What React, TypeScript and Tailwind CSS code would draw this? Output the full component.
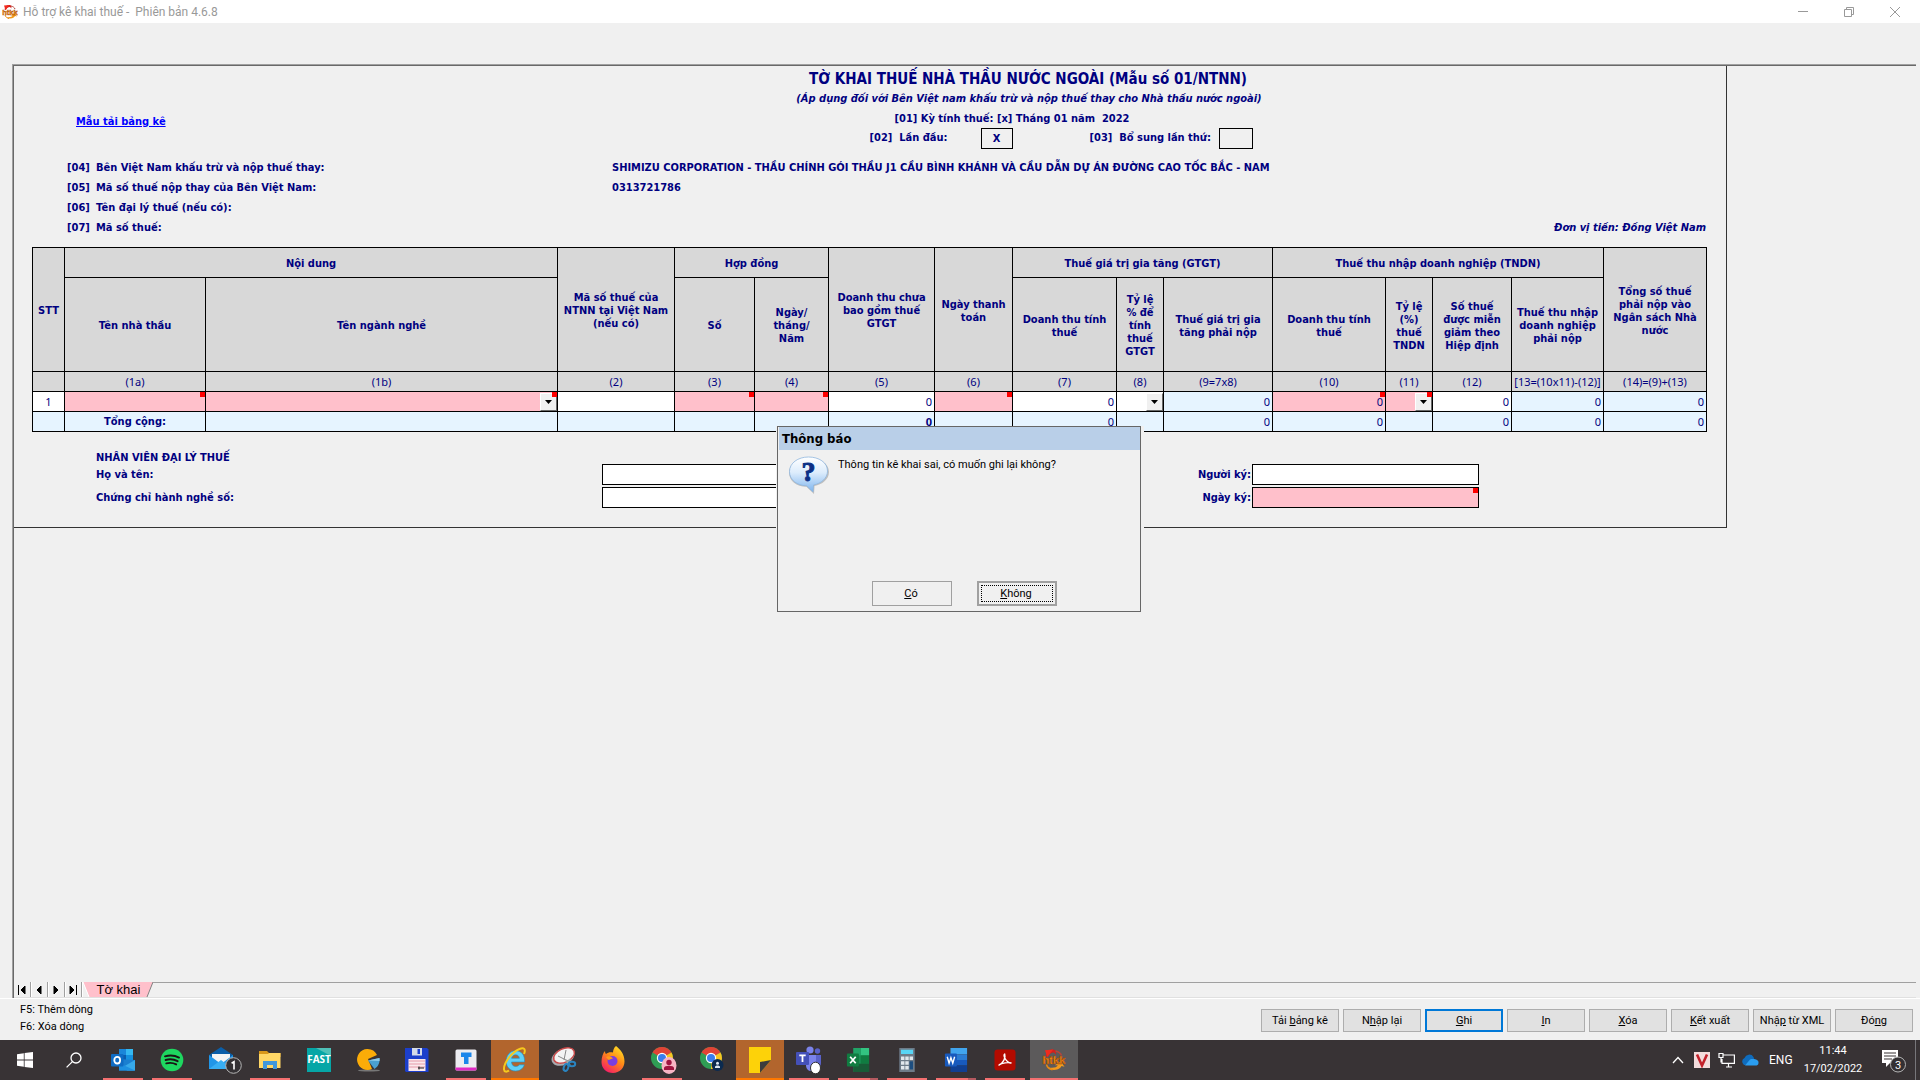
import React, { useState } from 'react';
import clsx from 'clsx';

const TAHOMA_BOLD = "font-['DejaVu_Sans_Condensed','DejaVu_Sans',sans-serif] font-bold text-[11px]";

/* ---------- icons ---------- */

const HtkkLogo = ({ className }: { className?: string }) => (
  <svg viewBox="0 0 32 32" className={className} aria-hidden="true">
    <path d="M8 12 C9 8 12 6 16 6 L19 9 L18 3 C12 0 6 4 5 11 Z" fill="#d3201c" />
    <path d="M4 3 L15 2 L7 12 Z" fill="#f02a1e" />
    <path d="M18 4 C22 5 25 7 26 10" fill="none" stroke="#b5453a" strokeWidth="2" />
    <path d="M27 21 C26 27 21 30 13 29 L9 26 C15 27 20 26 21 23 L17 23 L25 18 L30 25 L26 24 Z" fill="#f39a1c" />
    <path d="M6 22 C7 26 10 28 14 29" fill="none" stroke="#e98a12" strokeWidth="2" />
    <text x="16" y="21" textAnchor="middle" className="font-['Liberation_Sans',sans-serif] font-bold text-[15px]" fill="#ffa01e" stroke="#a64500" strokeWidth="0.8">htkk</text>
  </svg>
);

const QuestionIcon = () => (
  <svg viewBox="0 0 42 40" className="h-10 w-[42px] shrink-0" aria-hidden="true">
    <defs>
      <linearGradient id="bubble" x1="0" y1="0" x2="0" y2="1">
        <stop offset="0" stopColor="#ffffff" />
        <stop offset="0.45" stopColor="#dcecfc" />
        <stop offset="1" stopColor="#7db4ee" />
      </linearGradient>
    </defs>
    <path d="M21 3 C32 3 41 8.500 41 17 C41 24.500 34 29.500 26.500 31 L26 39 L18.500 31.800 C8.500 31.500 1 26 1 17.500 C1 9 10 3 21 3 Z" fill="#a9a9a9" opacity="0.7" />
    <path d="M20.500 2 C31 2 39.500 7.500 39.500 16 C39.500 23.500 33 28.500 25.500 30 L25 37 L18.500 30.800 C9 30.500 1.500 25 1.500 16.500 C1.500 8 10 2 20.500 2 Z" fill="url(#bubble)" stroke="#8fb6de" strokeWidth="0.8" />
    <text x="20.500" y="26" textAnchor="middle" className="font-['Liberation_Serif',serif] font-bold text-[28px]" fill="#0b2f86" stroke="#0b2f86" strokeWidth="1">?</text>
  </svg>
);

const WindowsIcon = () => (
  <svg viewBox="0 0 16 16" className="size-4" fill="#fff"><path d="M0 2.200 6.800 1.200V7.600H0ZM7.600 1.100 16 0V7.600H7.600ZM0 8.400H6.800V14.800L0 13.800ZM7.600 8.400H16V16L7.600 14.900Z" /></svg>
);
const SearchIcon = () => (
  <svg viewBox="0 0 16 16" className="size-4" fill="none" stroke="#fff" strokeWidth="1.300"><circle cx="10" cy="6" r="5" /><path d="M6.400 9.600.6 15.400" /></svg>
);
const OutlookIcon = () => (
  <svg viewBox="0 0 24 22" className="h-[22px] w-6">
    <path d="M8 0h14v13H8z" fill="#0a5cad" /><path d="M8 0h7v6H8z" fill="#1a86d9" /><path d="M15 0h7v6h-7z" fill="#35b8f1" /><path d="M15 6h7v6h-7z" fill="#1490df" />
    <path d="M8 10l16 1v10.500H8z" fill="#1a7fd0" /><path d="M24 11 12 18l4 3.500h8z" fill="#37a9ea" /><path d="M8 14l16 7.500H8z" fill="#1e90e0" />
    <rect y="5" width="12.500" height="12.500" rx="1" fill="#0f6cc4" /><ellipse cx="6.200" cy="11.200" rx="2.900" ry="3.300" fill="none" stroke="#fff" strokeWidth="1.800" />
  </svg>
);
const SpotifyIcon = () => (
  <svg viewBox="0 0 24 24" className="size-6"><circle cx="12" cy="12" r="11.300" fill="#1ed760" /><path d="M5 8.300c5-1.400 10-.9 14 1.300M5.600 12c4.300-1.200 8.500-.7 12 1.200M6.300 15.400c3.600-.9 6.900-.6 9.900 1" fill="none" stroke="#191414" strokeWidth="1.900" strokeLinecap="round" /></svg>
);
const MailIcon = () => (
  <svg viewBox="0 0 34 28" className="ml-2 h-7 w-[34px]">
    <path d="M1 9 13 1l12 8v3H1z" fill="#0b5ea8" /><path d="M4 8h18v9H4z" fill="#f4f4f4" /><path d="M1 9l12 9 12-9v14H1z" fill="#2196e8" /><path d="M1 23l12-9 12 9z" fill="#38aef3" />
    <circle cx="25.500" cy="19.500" r="7.800" fill="#333033" stroke="#b5b5b5" /><path d="M23.600 17.300 26 15.800v7.700" fill="none" stroke="#fff" strokeWidth="1.600" />
  </svg>
);
const ExplorerIcon = () => (
  <svg viewBox="0 0 22 20" className="h-5 w-[22px]"><path d="M0 1h8l2 2h11.500v4H0z" fill="#d9981a" /><path d="M0 4h9l1-1h11.500v15H0z" fill="#ffd766" /><path d="M4 19v-8h14v8h-4v-4H8v4z" fill="#3f97dc" /></svg>
);
const FastIcon = () => (
  <svg viewBox="0 0 24 24" className="size-6"><path d="M0 0h24v24H0z" fill="#06a6a6" /><path d="M9 0h15v8z" fill="#4fc0b8" /><text x="12" y="15" textAnchor="middle" fill="#fff" className="font-['Open_Sans',sans-serif] font-bold text-[10px]">FAST</text></svg>
);
const PieIcon = () => (
  <svg viewBox="0 0 24 24" className="size-6"><ellipse cx="13" cy="22.500" rx="11" ry="1" fill="#777" /><path d="M11 1a10.500 10.500 0 1 0 5 20L12 11l9-4A10.500 10.500 0 0 0 11 1Z" fill="#fbac08" /><path d="M12 12.500 23.500 10c.5 4.500-1 8-5 11Z" fill="#4aa0cf" /><path d="M12 12.500 23.500 10l.1 3Z" fill="#8fcbe9" /></svg>
);
const FloppyIcon = () => (
  <svg viewBox="0 0 24 24" className="size-6"><path d="M0 0h22l1.500 1.500V24H1L0 23z" fill="#1c3fcb" /><path d="M7 0h10v7.500H7z" fill="#d5dbe8" /><path d="M12.500 1H15v5h-2.500z" fill="#1c3fcb" /><path d="M3.500 11h17v12h-17z" fill="#fbe9ec" /><path d="M4 13h16M4 16h16M4 19h16" stroke="#e59aa8" /><path d="M13 20h6M14 18.500v3" stroke="#222" /></svg>
);
const TIcon = () => (
  <svg viewBox="0 0 22 22" className="size-[22px]"><rect width="21" height="21" rx="1.500" y=".5" x=".5" fill="#ececf0" /><path d="M.5 18.500h21V20a1.500 1.500 0 0 1-1.500 1.500H2A1.500 1.500 0 0 1 .5 20z" fill="#e02bc4" /><path d="M6 3.500h10.500V8h-3v7H9V8H6z" fill="#1b86ea" /></svg>
);
const IeIcon = () => (
  <svg viewBox="0 0 26 28" className="h-7 w-[26px]"><path d="M22.500 16H9.500c.2 3 2 4.500 4.300 4.500 1.600 0 2.800-.6 3.500-1.700h5c-1.300 4-4.500 6.200-8.600 6.200C8 25 4.200 21 4.200 15.200 4.200 9 8.300 4.800 13.800 4.800c5.600 0 9.200 4.300 8.700 11.200ZM9.600 12.300h7.800c-.3-2.300-1.700-3.500-3.700-3.500-2.200 0-3.700 1.300-4.100 3.500Z" fill="#5fd0f7" stroke="#1e8fc9" strokeWidth=".6" /><path d="M22 8C24 3 22 1 17.500 3 10 6 1.500 17 2 23.500c.2 2.700 2.700 2.500 5 1.200" fill="none" stroke="#f6c91d" strokeWidth="2" /></svg>
);
const SnipIcon = () => (
  <svg viewBox="0 0 26 28" className="h-7 w-[26px]"><ellipse cx="12" cy="11" rx="12" ry="8" transform="rotate(-25 12 11)" fill="#a9abb0" /><ellipse cx="13" cy="9.500" rx="11" ry="6.800" transform="rotate(-25 13 9.500)" fill="#f3f3f3" stroke="#c94a4a" strokeWidth="1.400" /><path d="M7 10l10 5M15 4l-2 10" stroke="#888" /><path d="M15 14l4 5M19 13l-3 5" stroke="#9aa" strokeWidth="1.500" /><ellipse cx="15" cy="21.500" rx="2.200" ry="3.500" transform="rotate(20 15 21.500)" fill="none" stroke="#2a84c0" strokeWidth="2" /><ellipse cx="21" cy="18" rx="3.200" ry="2.200" fill="none" stroke="#2a84c0" strokeWidth="2" /></svg>
);
const FirefoxIcon = () => (
  <svg viewBox="0 0 24 28" className="h-7 w-6">
    <defs><linearGradient id="fox" x1="0.800" y1="0" x2="0.200" y2="1"><stop offset="0" stopColor="#ffe226" /><stop offset=".45" stopColor="#ff8a16" /><stop offset="1" stopColor="#f5156c" /></linearGradient></defs>
    <path d="M15 0c4 3 8.500 8 8.500 15.500C23.500 22 18.500 27 12 27S.5 22.500.5 16C.5 11 2 7 4 5c0 1.500.5 2.500 1 3 2-2 5-2 7-1.500C12 4 13 1.500 15 0Z" fill="url(#fox)" /><circle cx="11.500" cy="15" r="5" fill="#7a3ee0" /><path d="M5 11c3-2 6 0 7 1.500-2 0-3 1.500-4.500 1.500" fill="#ff9b1a" />
  </svg>
);
const ChromeIcon = ({ badge }: { badge: 'person' | 'dark' }) => (
  <svg viewBox="0 0 28 30" className="ml-1 h-[30px] w-7">
    <circle cx="12" cy="13" r="11" fill="#2f9e55" /><path d="M12 13 2.500 7.500A11 11 0 0 1 21.500 7.500Z" fill="#e24335" /><path d="M12 13 21.500 7.500A11 11 0 0 1 12 24Z" fill="#fbc520" /><circle cx="12" cy="13" r="5.200" fill="#fff" /><circle cx="12" cy="13" r="4" fill="#3b7ded" />
    {badge === 'person' ? (
      <><ellipse cx="19" cy="20.500" rx="7.500" ry="8.500" fill="#f8b4c4" /><circle cx="19" cy="17.500" r="2.700" fill="#a01440" /><path d="M14 25v-2c0-3 10-3 10 0v2z" fill="#a01440" /></>
    ) : (
      <><circle cx="18.500" cy="20" r="6" fill="#0b2a4f" /><circle cx="18.500" cy="18.300" r="1.500" fill="#dbe7f3" /><path d="M16 23v-1c0-2 5-2 5 0v1z" fill="#dbe7f3" /></>
    )}
  </svg>
);
const StickyIcon = () => (
  <svg viewBox="0 0 22 26" className="h-[26px] w-[22px]"><path d="M0 0h22v13L11 26H0z" fill="#fdd209" /><path d="M11 26V15l11-2z" fill="#3d3d3d" /></svg>
);
const TeamsIcon = () => (
  <svg viewBox="0 0 26 28" className="h-7 w-[26px]"><circle cx="14" cy="4" r="3.600" fill="#7b83eb" /><circle cx="21.500" cy="5" r="2.700" fill="#5a62c8" /><path d="M10 9h10v10c0 8-10 8-10 0z" fill="#7b83eb" /><path d="M20 9h5v8c0 4-3 5-5 4z" fill="#5a62c8" /><rect y="6" width="13" height="13" rx="1" fill="#4450b8" /><path d="M3.300 9.300h6.400M6.500 9.300V16" stroke="#fff" strokeWidth="1.800" /><ellipse cx="19.500" cy="22" rx="5" ry="5.800" fill="#fff" stroke="#333" /></svg>
);
const ExcelIcon = () => (
  <svg viewBox="0 0 24 26" className="h-6 w-6"><path d="M7 0h17v26H7z" fill="#1b8f55" /><path d="M15 0h9v8h-9z" fill="#33c481" /><path d="M7 0h8v8H7z" fill="#21a366" /><path d="M15 8h9v9h-9z" fill="#107c41" /><path d="M7 17h17v9H7z" fill="#185c37" /><rect y="6" width="13" height="14" rx="1" fill="#107c41" /><path d="M3.500 9.500l6 7M9.500 9.500l-6 7" stroke="#fff" strokeWidth="1.900" /></svg>
);
const CalcIcon = () => (
  <svg viewBox="0 0 18 28" className="h-6 w-[18px]"><path d="M0 0h18v28H0z" fill="#6d7b88" /><path d="M2 2h14v5H2z" fill="#58d5f5" /><path d="M2 10h4v4H2zM7 10h4v4H7zM12 10h4v4h-4zM2 15.500h4v4H2zM7 15.500h4v4H7zM2 21h4v4H2zM7 21h4v4H7z" fill="#e1e7ec" /><path d="M12 15.500h4V25h-4z" fill="#1d4e80" /></svg>
);
const WordIcon = () => (
  <svg viewBox="0 0 24 26" className="h-6 w-6"><path d="M6 0h18v7H6z" fill="#41a5ee" /><path d="M6 7h18v6H6z" fill="#2b7cd3" /><path d="M6 13h18v6H6z" fill="#185abd" /><path d="M6 19h18v7H6z" fill="#103f91" /><rect y="6" width="13" height="14" rx="1" fill="#185abd" /><path d="M2.500 9.500l2 7 2-6 2 6 2-7" fill="none" stroke="#fff" strokeWidth="1.500" /></svg>
);
const AcrobatIcon = () => (
  <svg viewBox="0 0 22 22" className="size-[22px]"><rect width="21" height="21" x=".5" y=".5" rx="3" fill="#b30b00" /><path d="M5 16c4-1.500 7-7 5.700-11-1.500 1 .3 8 6.300 9-3-1-9 0-12 2Z" fill="none" stroke="#fff" strokeWidth="1.400" strokeLinejoin="round" /></svg>
);

/* ---------- form data ---------- */

const columnWidths = ['w-[32px]', 'w-[141px]', 'w-[352px]', 'w-[117px]', 'w-[80px]', 'w-[74px]', 'w-[106px]', 'w-[78px]', 'w-[104px]', 'w-[47px]', 'w-[109px]', 'w-[113px]', 'w-[47px]', 'w-[79px]', 'w-[92px]', 'w-[103px]'];

const columnCodes = ['', '(1a)', '(1b)', '(2)', '(3)', '(4)', '(5)', '(6)', '(7)', '(8)', '(9=7x8)', '(10)', '(11)', '(12)', '[13=(10x11)-(12)]', '(14)=(9)+(13)'];

type Cell = { name: string; kind: 'input' | 'select' | 'output'; value?: string; bg: string; required?: boolean };

const rowCells: Cell[] = [
  { name: 'Tên nhà thầu', kind: 'input', bg: 'bg-[#ffc0cb]', required: true },
  { name: 'Tên ngành nghề', kind: 'select', bg: 'bg-[#ffc0cb]', required: true },
  { name: 'Mã số thuế của NTNN', kind: 'input', bg: 'bg-white' },
  { name: 'Số hợp đồng', kind: 'input', bg: 'bg-[#ffc0cb]', required: true },
  { name: 'Ngày hợp đồng', kind: 'input', bg: 'bg-[#ffc0cb]', required: true },
  { name: 'Doanh thu chưa bao gồm thuế GTGT', kind: 'input', value: '0', bg: 'bg-white' },
  { name: 'Ngày thanh toán', kind: 'input', bg: 'bg-[#ffc0cb]', required: true },
  { name: 'Doanh thu tính thuế GTGT', kind: 'input', value: '0', bg: 'bg-white' },
  { name: 'Tỷ lệ % GTGT', kind: 'select', bg: 'bg-white' },
  { name: 'Thuế GTGT phải nộp', kind: 'output', value: '0', bg: 'bg-[#e6f4ff]' },
  { name: 'Doanh thu tính thuế TNDN', kind: 'input', value: '0', bg: 'bg-[#ffc0cb]', required: true },
  { name: 'Tỷ lệ (%) thuế TNDN', kind: 'select', bg: 'bg-[#ffc0cb]', required: true },
  { name: 'Số thuế được miễn giảm', kind: 'input', value: '0', bg: 'bg-white' },
  { name: 'Thuế TNDN phải nộp', kind: 'output', value: '0', bg: 'bg-[#e6f4ff]' },
  { name: 'Tổng số thuế phải nộp', kind: 'output', value: '0', bg: 'bg-[#e6f4ff]' },
];

const totals = ['', '', '', '', '0', '', '0', '', '0', '0', '', '0', '0', '0'];

const actions: [string, string, string][] = [
  ['Tải ', 'b', 'ảng kê'],
  ['N', 'h', 'ập lại'],
  ['', 'G', 'hi'],
  ['', 'I', 'n'],
  ['', 'X', 'óa'],
  ['', 'K', 'ết xuất'],
  ['Nhậ', 'p', ' từ XML'],
  ['Đó', 'n', 'g'],
];

type TaskItem = { name: string; icon: React.ReactNode; state?: 'open' | 'stacked' | 'alert' | 'active' };

const taskItems: TaskItem[] = [
  { name: 'Start', icon: <WindowsIcon /> },
  { name: 'Search', icon: <SearchIcon /> },
  { name: 'Outlook', icon: <OutlookIcon />, state: 'open' },
  { name: 'Spotify', icon: <SpotifyIcon />, state: 'open' },
  { name: 'Mail', icon: <MailIcon /> },
  { name: 'File Explorer', icon: <ExplorerIcon />, state: 'open' },
  { name: 'FAST', icon: <FastIcon /> },
  { name: 'Reports', icon: <PieIcon /> },
  { name: 'Total Commander', icon: <FloppyIcon /> },
  { name: 'TeamViewer', icon: <TIcon />, state: 'open' },
  { name: 'Internet Explorer', icon: <IeIcon />, state: 'alert' },
  { name: 'Snipping Tool', icon: <SnipIcon /> },
  { name: 'Firefox', icon: <FirefoxIcon /> },
  { name: 'Chrome 1', icon: <ChromeIcon badge="person" />, state: 'open' },
  { name: 'Chrome 2', icon: <ChromeIcon badge="dark" /> },
  { name: 'Sticky Notes', icon: <StickyIcon />, state: 'alert' },
  { name: 'Teams', icon: <TeamsIcon />, state: 'open' },
  { name: 'Excel', icon: <ExcelIcon />, state: 'stacked' },
  { name: 'Calculator', icon: <CalcIcon />, state: 'open' },
  { name: 'Word', icon: <WordIcon />, state: 'stacked' },
  { name: 'Acrobat', icon: <AcrobatIcon />, state: 'open' },
  { name: 'HTKK', icon: <HtkkLogo className="size-6" />, state: 'active' },
];

/* ---------- pieces ---------- */

const RequiredMark = () => <span className="pointer-events-none absolute top-0 right-0 size-[5px] bg-[#ff0000]" />;

const TitleBar = () => (
  <header className="flex h-[23px] shrink-0 items-center bg-white pl-0.5 text-[#999]">
    <HtkkLogo className="size-4" />
    <h1 className="ml-[5px] flex-1 whitespace-pre font-[Roboto,sans-serif] text-xs">{'Hỗ trợ kê khai thuế -  Phiên bản 4.6.8'}</h1>
    <button aria-label="Minimize" className="flex h-full w-[46px] items-center justify-center">
      <svg viewBox="0 0 10 10" className="size-2.5"><path d="M0 4.500h10" stroke="#999" /></svg>
    </button>
    <button aria-label="Restore" className="flex h-full w-[46px] items-center justify-center">
      <svg viewBox="0 0 10 10" className="size-2.5" fill="none" stroke="#999"><path d="M.5 2.500h7v7h-7zM2.500 2.500v-2h7v7h-2" /></svg>
    </button>
    <button aria-label="Close" className="mr-0.5 flex h-full w-[46px] items-center justify-center">
      <svg viewBox="0 0 10 10" className="size-2.5" fill="none" stroke="#999"><path d="M0 0l10 10M10 0L0 10" /></svg>
    </button>
  </header>
);

const InfoRow = ({ code, label, value, note }: { code: string; label: string; value?: string; note?: string }) => (
  <div className="flex h-5 items-center pt-0.5 pr-5 pl-[53px] whitespace-nowrap">
    <span className="w-[29px]">{code}</span>
    <span className="w-[516px]">{label}</span>
    <span className="flex-1">{value}</span>
    {note && <span className="italic">{note}</span>}
  </div>
);

const Th = ({ children, span = 1, rows = 1 }: { children?: React.ReactNode; span?: number; rows?: number }) => (
  <th colSpan={span} rowSpan={rows} className="border border-black bg-[#d8d8d8] p-0 pt-0.5 text-center align-middle font-bold">
    {children}
  </th>
);

const DataCell = ({ cell }: { cell: Cell }) => (
  <td className={clsx('relative border border-black p-0', cell.bg)}>
    {cell.kind === 'input' && (
      <input aria-label={cell.name} defaultValue={cell.value} className="block h-[19px] w-full bg-transparent pr-0.5 text-right outline-none" />
    )}
    {cell.kind === 'output' && <span className="block pr-0.5 text-right">{cell.value}</span>}
    {cell.kind === 'select' && (
      <>
        <select aria-label={cell.name} className="block h-[19px] w-full appearance-none bg-transparent outline-none">
          <option value=""></option>
        </select>
        <span className="pointer-events-none absolute top-px right-0 flex h-[18px] w-[17px] items-center justify-center border border-t-white border-r-[#696969] border-b-[#696969] border-l-white bg-[#f0f0f0]">
          <svg viewBox="0 0 7 4" className="h-1 w-[7px]"><path d="M0 0h7L3.500 4z" /></svg>
        </span>
      </>
    )}
    {cell.required && <RequiredMark />}
  </td>
);

const DeclarationTable = () => (
  <div className="mt-2.5 pr-[21px] pl-[18px]">
    <table className="w-full table-fixed border-collapse leading-[13px]">
      <colgroup>
        {columnWidths.map((w, i) => <col key={i} className={w} />)}
      </colgroup>
      <thead>
        <tr className="h-[30px]">
          <Th rows={2}>STT</Th>
          <Th span={2}>Nội dung</Th>
          <Th rows={2}>Mã số thuế của<br />NTNN tại Việt Nam<br />(nếu có)</Th>
          <Th span={2}>Hợp đồng</Th>
          <Th rows={2}>Doanh thu chưa<br />bao gồm thuế<br />GTGT</Th>
          <Th rows={2}>Ngày thanh<br />toán</Th>
          <Th span={3}>Thuế giá trị gia tăng (GTGT)</Th>
          <Th span={4}>Thuế thu nhập doanh nghiệp (TNDN)</Th>
          <Th rows={2}>Tổng số thuế<br />phải nộp vào<br />Ngân sách Nhà<br />nước</Th>
        </tr>
        <tr className="h-[94px]">
          <Th>Tên nhà thầu</Th>
          <Th>Tên ngành nghề</Th>
          <Th>Số</Th>
          <Th>Ngày/<br />tháng/<br />Năm</Th>
          <Th>Doanh thu tính<br />thuế</Th>
          <Th>Tỷ lệ<br />% để<br />tính<br />thuế<br />GTGT</Th>
          <Th>Thuế giá trị gia<br />tăng phải nộp</Th>
          <Th>Doanh thu tính<br />thuế</Th>
          <Th>Tỷ lệ<br />(%)<br />thuế<br />TNDN</Th>
          <Th>Số thuế<br />được miễn<br />giảm theo<br />Hiệp định</Th>
          <Th>Thuế thu nhập<br />doanh nghiệp<br />phải nộp</Th>
        </tr>
        <tr className="h-5 bg-[#d8d8d8] font-['Noto_Sans',sans-serif]">
          {columnCodes.map((code, i) => (
            <td key={i} className="border border-black p-0 text-center font-normal whitespace-nowrap">{code}</td>
          ))}
        </tr>
      </thead>
      <tbody className="font-['Noto_Sans',sans-serif] font-normal">
        <tr className="h-5">
          <td className="border border-black bg-white p-0 text-center">1</td>
          {rowCells.map((cell) => <DataCell key={cell.name} cell={cell} />)}
        </tr>
        <tr className="h-5 bg-[#e6f4ff]">
          <td className="border border-black p-0" />
          <td className={clsx('border border-black p-0 text-center', TAHOMA_BOLD)}>Tổng cộng:</td>
          {totals.map((t, i) => (
            <td key={i} className={clsx('border border-black p-0 pr-0.5 text-right', i === 4 && 'font-bold')}>{t}</td>
          ))}
        </tr>
      </tbody>
    </table>
  </div>
);

const SignatureRow = ({ id, left, right, required }: { id: string; left: string; right: string; required?: boolean }) => (
  <div className="flex h-[21px] items-stretch">
    <label htmlFor={`${id}-agent`} className="flex w-[506px] items-center pt-0.5">{left}</label>
    <input id={`${id}-agent`} className="w-[325px] border border-black bg-white px-1" />
    <label htmlFor={`${id}-sign`} className="flex flex-1 items-center justify-end pt-0.5 pr-px">{right}</label>
    <div className="relative w-[227px]">
      <input id={`${id}-sign`} className={clsx('block h-full w-full border border-black px-1', required ? 'bg-[#ffc0cb]' : 'bg-white')} />
      {required && <span className="absolute top-px right-px size-[5px] bg-[#ff0000]" />}
    </div>
  </div>
);

const Declaration = () => (
  <section className={clsx('mr-[189px] border-r border-b border-[#333] pb-[19px] text-[#000080]', TAHOMA_BOLD)}>
    <h2 className="h-[22px] pt-0.5 pl-[316px] text-center text-[15px] leading-[22px]">TỜ KHAI THUẾ NHÀ THẦU NƯỚC NGOÀI (Mẫu số 01/NTNN)</h2>
    <p className="h-5 pl-[318px] text-center leading-[22px] italic">(Áp dụng đối với Bên Việt nam khấu trừ và nộp thuế thay cho Nhà thầu nước ngoài)</p>
    <div className="flex h-5 items-center pt-0.5">
      <div className="w-[316px] pt-1.5 pl-[62px]">
        <a href="#" className="text-[#0000ff] underline">Mẫu tải bảng kê</a>
      </div>
      <p className="flex-1 pr-8 text-center whitespace-pre">{'[01] Kỳ tính thuế: [x] Tháng 01 năm  2022'}</p>
    </div>
    <div className="flex h-5 items-center justify-center pl-[382px]">
      <label htmlFor="first" className="w-[111px] whitespace-pre">{'[02]  Lần đầu:'}</label>
      <input id="first" defaultValue="X" className="h-[21px] w-8 border border-black bg-transparent text-center" />
      <label htmlFor="extra" className="ml-[77px] w-[129px] whitespace-pre">{'[03]  Bổ sung lần thứ:'}</label>
      <input id="extra" className="h-[21px] w-[34px] border border-black bg-transparent text-center" />
    </div>
    <div className="mt-[9px]">
      <InfoRow code="[04]" label="Bên Việt Nam khấu trừ và nộp thuế thay:" value="SHIMIZU CORPORATION - THẦU CHÍNH GÓI THẦU J1 CẦU BÌNH KHÁNH VÀ CẦU DẪN DỰ ÁN ĐƯỜNG CAO TỐC BẮC - NAM" />
      <InfoRow code="[05]" label="Mã số thuế nộp thay của Bên Việt Nam:" value="0313721786" />
      <InfoRow code="[06]" label="Tên đại lý thuế (nếu có):" />
      <InfoRow code="[07]" label="Mã số thuế:" note="Đơn vị tiền: Đồng Việt Nam" />
    </div>
    <DeclarationTable />
    <div className="mt-[18px] flex flex-col gap-0.5 pr-[247px] pl-[82px]">
      <h3 className="h-3 leading-4">NHÂN VIÊN ĐẠI LÝ THUẾ</h3>
      <SignatureRow id="name" left="Họ và tên:" right="Người ký:" />
      <SignatureRow id="date" left="Chứng chỉ hành nghề số:" right="Ngày ký:" required />
    </div>
  </section>
);

const SheetTabs = () => {
  const navs: [string, string][] = [
    ['First sheet', 'M1.500 1v10M8 2v8L4 6z'],
    ['Previous sheet', 'M7 2v8L3 6z'],
    ['Next sheet', 'M3 2v8l4-4z'],
    ['Last sheet', 'M8.500 1v10M2 2v8l4-4z'],
  ];
  return (
    <div className="flex h-4 border-b border-[#e0e0e0]">
      {navs.map(([label, d]) => (
        <button key={label} aria-label={label} className="flex w-[17px] items-center justify-center border-r border-[#a0a0a0] shadow-[1px_0_0_#fff]">
          <svg viewBox="0 0 10 12" className="h-3 w-2.5" fill="#000" stroke="#000"><path d={d} /></svg>
        </button>
      ))}
      <button className="relative flex h-[15px] w-[71px] items-center justify-center text-black">
        <svg viewBox="0 0 71 15" className="absolute inset-0 h-[15px] w-[71px]" aria-hidden="true">
          <path d="M1 0h70l-6 15H7z" fill="#ffc0cb" />
          <path d="M1 0l6 15" stroke="#fff" />
          <path d="M71 0l-6 15" stroke="#808080" />
        </svg>
        <span className="relative pt-px pl-0.5 font-['Liberation_Sans',sans-serif] text-[13px] leading-[14px]">Tờ khai</span>
      </button>
      <div className="flex-1 border-t border-[#a0a0a0]" />
    </div>
  );
};

const ActionBar = () => (
  <footer className="flex h-[42px] shrink-0 items-start justify-between border-t border-white pr-[7px] pl-5 font-[Roboto,sans-serif] text-[11px] text-black">
    <p className="pt-0.5 leading-[17px]">F5: Thêm dòng<br />F6: Xóa dòng</p>
    <div className="flex gap-1 pt-2.5">
      {actions.map(([pre, key, post]) => (
        <button key={key + post} className={clsx('h-[23px] w-[78px] bg-[#e1e1e1] pt-0.5 whitespace-pre', key === 'G' ? 'border-2 border-[#0078d7]' : 'border border-[#adadad]')}>
          {pre}<u>{key}</u>{post}
        </button>
      ))}
    </div>
  </footer>
);

const ConfirmDialog = ({ onClose }: { onClose: () => void }) => (
  <div className="absolute inset-0 flex items-center justify-center pr-0.5 pb-0.5">
    <div role="dialog" aria-labelledby="dlg-title" className="flex h-[186px] w-[364px] flex-col border border-[#666] bg-[#f0f0f0] font-[Roboto,sans-serif] text-[11px] text-black shadow-[3px_0_0_#f0f0f0,-1px_0_0_#f0f0f0]">
      <h2 id="dlg-title" className="ml-px h-[23px] bg-[#b9cfe8] pl-[3px] font-['DejaVu_Sans_Condensed',sans-serif] text-[13px] leading-[23px] font-bold">Thông báo</h2>
      <div className="flex flex-1 gap-2 pt-[5px] pl-2.5">
        <QuestionIcon />
        <p className="pt-0.5">Thông tin kê khai sai, có muốn ghi lại không?</p>
      </div>
      <div className="mb-[5px] flex gap-[25px] pl-[94px]">
        <button onClick={onClose} className="h-[25px] w-20 border border-[#a0a0a0] pt-0.5 pr-0.5"><u>C</u>ó</button>
        <button onClick={onClose} className="h-[25px] w-20 border-2 border-[#a0a0a0] p-0.5">
          <span className="flex h-full items-center justify-center border border-dotted border-black pt-0.5 pr-0.5 whitespace-pre"><u>K</u>hông</span>
        </button>
      </div>
    </div>
  </div>
);

const TaskButton = ({ item }: { item: TaskItem }) => (
  <button
    title={item.name}
    className={clsx(
      'relative flex h-10 w-12 items-center justify-center',
      item.state === 'alert' && 'bg-[#b2652d]',
      item.state === 'active' && 'bg-[#5c5a5b]',
    )}
  >
    {item.icon}
    {item.state === 'open' && <span className="absolute inset-x-1 bottom-0 h-0.5 bg-[#f47070]" />}
    {item.state === 'stacked' && <span className="absolute inset-x-1 bottom-0 h-0.5 border-r-8 border-[#b55a60] bg-[#f47070]" />}
    {item.state === 'alert' && <span className="absolute inset-x-0 bottom-0 h-0.5 bg-[#ff7800]" />}
    {item.state === 'active' && <span className="absolute inset-x-0 bottom-0 h-0.5 bg-[#f47070]" />}
  </button>
);

const Taskbar = () => (
  <nav className="flex h-10 shrink-0 items-center justify-between bg-[#383335] pl-px font-[Roboto,sans-serif] text-xs text-white">
    <div className="flex gap-px">
      {taskItems.map((item) => <TaskButton key={item.name} item={item} />)}
    </div>
    <div className="flex h-full items-center">
      <svg viewBox="0 0 12 8" className="h-2 w-3" fill="none" stroke="#fff" strokeWidth="1.300"><path d="M1 7l5-5.500L11 7" /></svg>
      <svg viewBox="0 0 16 16" className="ml-2.5 size-4"><path d="M0 0h16v16H0z" fill="#f3dcdc" /><path d="M3 2.500 8 13.500l5-11" fill="none" stroke="#c3202a" strokeWidth="2.600" /></svg>
      <svg viewBox="0 0 17 16" className="ml-2 h-4 w-[17px]" fill="none" stroke="#fff" strokeWidth="1.200"><path d="M5 3h11.400v8.400H4V7M8 15h6M10.500 11.400V15M1 1.500h4v4H1zM3 5.500v5" /></svg>
      <svg viewBox="0 0 18 12" className="ml-1.5 h-3 w-[18px]"><path d="M3 11A4 4 0 0 1 3.500 4 5 5 0 0 1 12.500 3L15 11Z" fill="#0f6cbd" /><path d="M4 11.500 9 5.500C12 4.500 18 5 17.500 9c0 2-1.500 2.500-3 2.500Z" fill="#2a9df0" /></svg>
      <span className="ml-2.5 w-[26px]">ENG</span>
      <time className="ml-1.5 w-16 text-center text-[11px] leading-[18px]">11:44<br />17/02/2022</time>
      <button aria-label="Notifications" className="mr-2 ml-4">
        <svg viewBox="0 0 26 26" className="size-[26px]">
          <path d="M1 3h16v13H9l-4 4v-4H1z" fill="#fff" /><path d="M3 6h12M3 9h12M3 12h8" stroke="#383335" strokeWidth="1.200" />
          <circle cx="17" cy="17.500" r="7.500" fill="#333033" stroke="#b5b5b5" />
          <text x="17" y="21.500" textAnchor="middle" fill="#fff" className="text-[11px]">3</text>
        </svg>
      </button>
      <div className="mr-1 h-full w-px bg-[#77767a]" />
    </div>
  </nav>
);

export default function App() {
  const [isDialogOpen, setIsDialogOpen] = useState(true);

  return (
    <div className="flex h-screen flex-col overflow-hidden bg-[#f0f0f0]">
      <div className="relative flex min-h-0 flex-1 flex-col">
        <TitleBar />
        <main className="mt-[41px] mr-1 ml-3 flex min-h-0 flex-1 border-t border-l border-[#a0a0a0]">
          <div className="flex min-w-0 flex-1 flex-col justify-between border-t border-l border-[#696969]">
            <Declaration />
            <SheetTabs />
          </div>
        </main>
        <ActionBar />
        {isDialogOpen && <ConfirmDialog onClose={() => setIsDialogOpen(false)} />}
      </div>
      <Taskbar />
    </div>
  );
}
